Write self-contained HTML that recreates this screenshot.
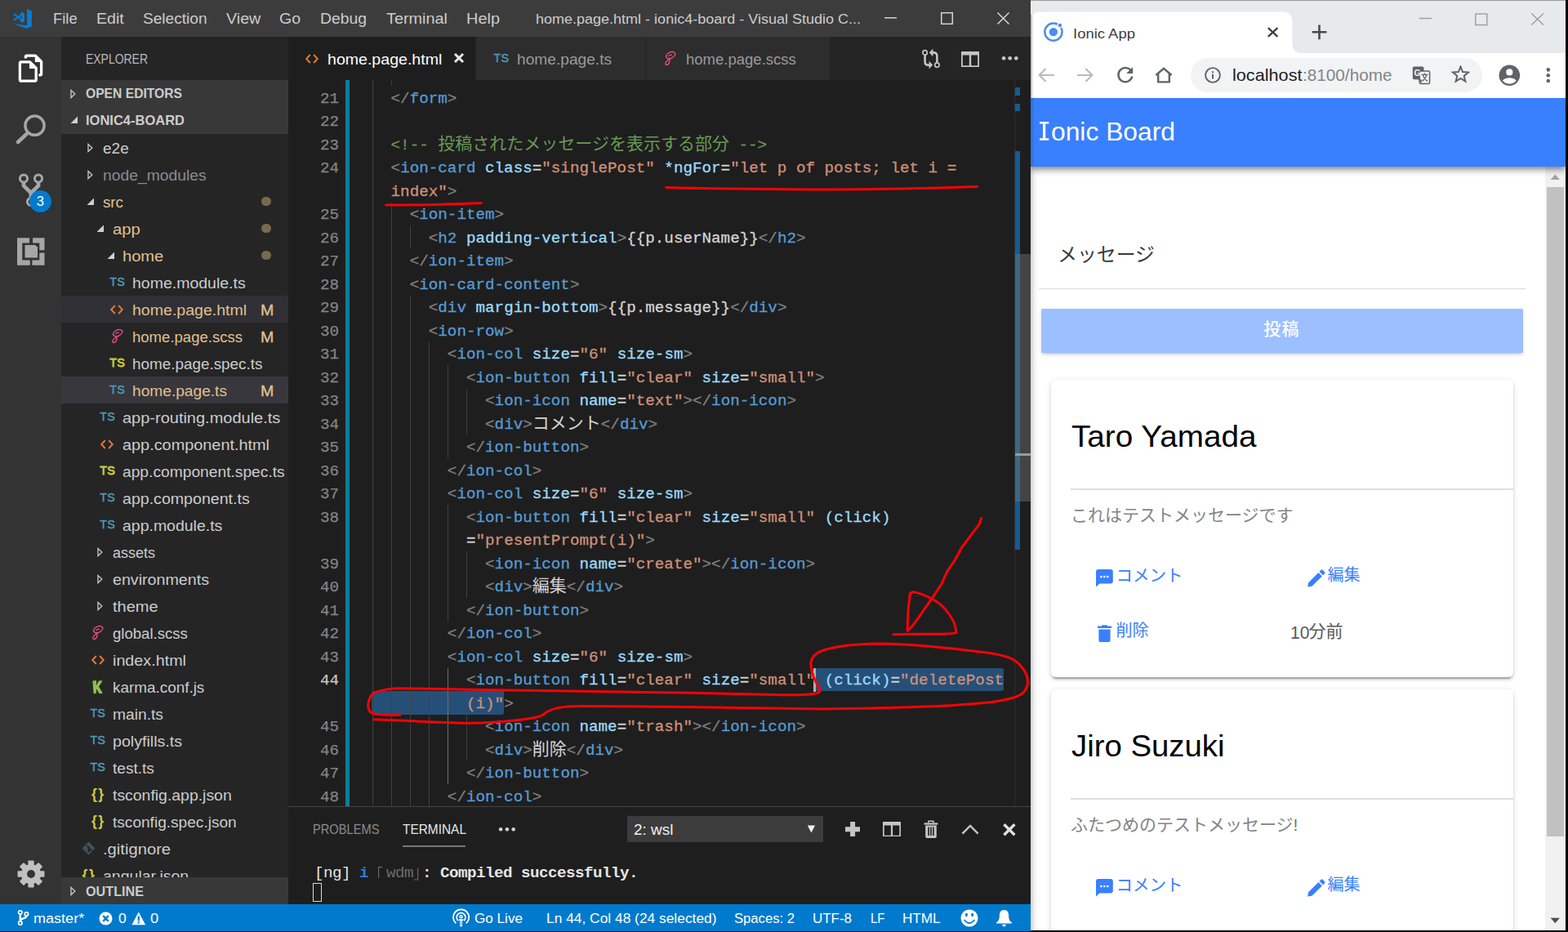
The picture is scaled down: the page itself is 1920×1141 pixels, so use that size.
<!DOCTYPE html><html lang="ja"><head><meta charset="utf-8"><title>home.page.html - ionic4-board - Visual Studio Code</title>
<style>
html,body{margin:0;padding:0}
body{width:1920px;height:1141px;overflow:hidden;background:#000;position:relative;font-family:"Liberation Sans",sans-serif}
div,svg{box-sizing:border-box}
.t{position:absolute;white-space:pre;transform-origin:0 50%}
.cj{font-family:"Liberation Sans","Noto Sans CJK JP",sans-serif;white-space:pre;-webkit-text-stroke:0}
.cjm{font-family:"Liberation Mono","Noto Sans CJK JP",monospace;white-space:pre;-webkit-text-stroke:0;font-size:21px}
.abs{position:absolute}
.cl{position:absolute;white-space:pre;-webkit-text-stroke:0.3px;font-family:"Liberation Mono",monospace;font-size:19.24px;height:28.5px;line-height:28.5px;color:#d4d4d4}
.ln{position:absolute;left:353px;width:62px;text-align:right;font-family:"Liberation Mono",monospace;font-size:19.24px;height:28.5px;line-height:28.5px;color:#858585;-webkit-text-stroke:0.25px}
.p{color:#808080}.g{color:#569cd6}.a{color:#9cdcfe}.s{color:#ce9178}.c{color:#6a9955}
.ig{position:absolute;width:1px;background:#404040}
.term{position:absolute;font-family:"Liberation Mono",monospace;font-size:19.24px;letter-spacing:-0.546px;height:24px;line-height:24px;white-space:pre;color:#e5e5e5}
</style></head><body><div style="position:absolute;left:0px;top:0px;width:1262px;height:45px;background:#3c3c3c;"></div><svg style="position:absolute;left:14px;top:8px;" width="28" height="30" viewBox="0 0 28 30"><g fill="#0a7bd0"><path d="M2 21 L19 23.3 V2.85 L24.9 5.5 V24.8 L18.6 26.9 Z"/><path fill-rule="evenodd" d="M8.2 13 L12.9 6.5 L16 8.2 V18.3 L12.7 20 Z M10.5 13.2 L12.9 11.2 V15.6 Z"/><path d="M3 9.2 L9.6 13.9 M2.8 16.8 L9.6 12.1" stroke="#0a7bd0" stroke-width="2.1" fill="none"/></g></svg><div class="t" id="f0" style="left:65.0px;top:10.3px;height:26px;line-height:26px;font-size:18.8px;color:#cccccc;transform:scaleX(0.9813);">File</div><div class="t" id="f1" style="left:118.0px;top:10.3px;height:26px;line-height:26px;font-size:18.8px;color:#cccccc;transform:scaleX(1.0409);">Edit</div><div class="t" id="f2" style="left:174.7px;top:10.3px;height:26px;line-height:26px;font-size:18.8px;color:#cccccc;transform:scaleX(1.0173);">Selection</div><div class="t" id="f3" style="left:276.7px;top:10.3px;height:26px;line-height:26px;font-size:18.8px;color:#cccccc;transform:scaleX(1.0477);">View</div><div class="t" id="f4" style="left:341.7px;top:10.3px;height:26px;line-height:26px;font-size:18.8px;color:#cccccc;transform:scaleX(1.0374);">Go</div><div class="t" id="f5" style="left:391.7px;top:10.3px;height:26px;line-height:26px;font-size:18.8px;color:#cccccc;transform:scaleX(1.0296);">Debug</div><div class="t" id="f6" style="left:472.7px;top:10.3px;height:26px;line-height:26px;font-size:18.8px;color:#cccccc;transform:scaleX(1.0566);">Terminal</div><div class="t" id="f7" style="left:571.0px;top:10.3px;height:26px;line-height:26px;font-size:18.8px;color:#cccccc;transform:scaleX(1.0611);">Help</div><div class="t" id="f8" style="left:656.0px;top:10.6px;height:24px;line-height:24px;font-size:17.4px;color:#cccccc;transform:scaleX(1.0354);">home.page.html - ionic4-board - Visual Studio C...</div><svg style="position:absolute;left:1070px;top:0px;" width="192" height="45" viewBox="0 0 192 45"><g stroke="#d4d4d4" stroke-width="1.5" fill="none"><path d="M13 21.8 H28"/><rect x="82.7" y="15.7" width="13.6" height="13.6"/><path d="M151.5 15.5 L165.5 29.5 M165.5 15.5 L151.5 29.5"/></g></svg><div style="position:absolute;left:0px;top:45px;width:75px;height:1062px;background:#333333;"></div><svg style="position:absolute;left:21px;top:65px;" width="33" height="37" viewBox="0 0 33 37"><g fill="none" stroke="#fff" stroke-width="3.3" stroke-linejoin="round"><path d="M10.4 6.6 V4.6 Q10.4 3.2 11.8 3.2 H22.4 L29.6 10.4 V25.4 Q29.6 26.8 28.2 26.8 H26.4"/><path d="M4.8 10.8 H15.6 L23.2 18.4 V32.6 Q23.2 34.2 21.6 34.2 H4.8 Q3.4 34.2 3.4 32.6 V12.4 Q3.4 10.8 4.8 10.8 Z"/></g><path d="M15 10.6 V19 H23.4 Z" fill="#fff"/><path d="M21.8 3 V11 H29.8 Z" fill="#fff"/></svg><svg style="position:absolute;left:18px;top:138px;" width="40" height="40" viewBox="0 0 40 40"><g fill="none" stroke="#a6a6a6"><circle cx="24.5" cy="15.7" r="11.6" stroke-width="3.5"/><path d="M16 24.6 L4 36" stroke-width="4.6" stroke-linecap="round"/></g></svg><svg style="position:absolute;left:21px;top:210px;" width="36" height="46" viewBox="0 0 36 46"><g fill="none" stroke="#a6a6a6" stroke-width="3"><circle cx="8" cy="8.5" r="4.6"/><circle cx="26" cy="8.5" r="4.6"/><circle cx="17" cy="37" r="4.6"/><path d="M8 13 V17.4 L17 26.2 V32.5 M26 13 V17.4 L17 26.2" stroke-width="4.8" stroke-linejoin="round"/></g></svg><div class="abs" style="left:35.8px;top:233px;width:27px;height:27px;border-radius:50%;background:#007acc;color:#fff;font-size:16.5px;line-height:27px;text-align:center">3</div><svg style="position:absolute;left:20px;top:290px;" width="36" height="36" viewBox="0 0 36 36"><g fill="#a6a6a6"><path d="M1 1.2 H16.1 V7.4 H7.2 V28.5 H16.8 V34.7 H1 Z"/><path d="M20.1 1.2 H34.5 V16.3 H28.3 V7.4 H20.1 Z"/><path d="M19.4 28.5 H28.3 V19.6 H34.5 V34.7 H19.4 Z"/><path d="M10.5 10.1 H24 V11.7 H26 V25.5 H10.5 Z"/></g></svg><svg style="position:absolute;left:20px;top:1052px;" width="36" height="36" viewBox="0 0 36 36"><g transform="translate(18 18) scale(.955)" fill="#c0c0c0"><rect x="-3.8" y="-17.2" width="7.6" height="8" rx="1" transform="rotate(0)"/><rect x="-3.8" y="-17.2" width="7.6" height="8" rx="1" transform="rotate(45)"/><rect x="-3.8" y="-17.2" width="7.6" height="8" rx="1" transform="rotate(90)"/><rect x="-3.8" y="-17.2" width="7.6" height="8" rx="1" transform="rotate(135)"/><rect x="-3.8" y="-17.2" width="7.6" height="8" rx="1" transform="rotate(180)"/><rect x="-3.8" y="-17.2" width="7.6" height="8" rx="1" transform="rotate(225)"/><rect x="-3.8" y="-17.2" width="7.6" height="8" rx="1" transform="rotate(270)"/><rect x="-3.8" y="-17.2" width="7.6" height="8" rx="1" transform="rotate(315)"/><path fill-rule="evenodd" d="M0 -12.6 A12.6 12.6 0 1 0 0 12.6 A12.6 12.6 0 1 0 0 -12.6 Z M0 -5.2 A5.2 5.2 0 1 1 0 5.2 A5.2 5.2 0 1 1 0 -5.2 Z"/></g></svg><div style="position:absolute;left:75px;top:45px;width:278px;height:1062px;background:#252526;"></div><div class="t" id="f9" style="left:105.0px;top:62.1px;height:22px;line-height:22px;font-size:15.9px;color:#bbbbbb;transform:scaleX(0.8781);">EXPLORER</div><div style="position:absolute;left:75px;top:98px;width:278px;height:66px;background:#383838;"></div><svg style="position:absolute;left:86.4px;top:108.5px;" width="8" height="12" viewBox="0 0 8 12"><path d="M1 1.4 L5.8 6 L1 10.6 Z" fill="none" stroke="#c5c5c5" stroke-width="1.35" stroke-linejoin="miter"/></svg><div class="t" id="f10" style="left:105.0px;top:103.9px;height:22px;line-height:22px;font-size:15.9px;color:#cccccc;transform:scaleX(0.9850);font-weight:bold;">OPEN EDITORS</div><svg style="position:absolute;left:85.6px;top:141.6px;" width="10" height="10" viewBox="0 0 10 10"><path d="M9 0.5 V9 H0.5 Z" fill="#d0d0d0"/></svg><div class="t" id="f11" style="left:105.0px;top:137.2px;height:22px;line-height:22px;font-size:15.9px;color:#cccccc;transform:scaleX(1.0382);font-weight:bold;">IONIC4-BOARD</div><div style="position:absolute;left:75px;top:362px;width:278px;height:33px;background:#2f2f35;"></div><div style="position:absolute;left:75px;top:461px;width:278px;height:33px;background:#37373d;"></div><div class="t" id="f12" style="left:126.0px;top:168.5px;height:26px;line-height:26px;font-size:18.7px;color:#cccccc;transform:scaleX(1.0164);">e2e</div><svg style="position:absolute;left:107.4px;top:174.5px;" width="8" height="12" viewBox="0 0 8 12"><path d="M1 1.4 L5.8 6 L1 10.6 Z" fill="none" stroke="#c5c5c5" stroke-width="1.35" stroke-linejoin="miter"/></svg><div class="t" id="f13" style="left:126.0px;top:201.5px;height:26px;line-height:26px;font-size:18.7px;color:#8c8c8c;transform:scaleX(1.0334);">node_modules</div><svg style="position:absolute;left:107.4px;top:207.5px;" width="8" height="12" viewBox="0 0 8 12"><path d="M1 1.4 L5.8 6 L1 10.6 Z" fill="none" stroke="#c5c5c5" stroke-width="1.35" stroke-linejoin="miter"/></svg><div class="t" id="f14" style="left:126.0px;top:234.5px;height:26px;line-height:26px;font-size:18.7px;color:#e2c08d;transform:scaleX(1.0031);">src</div><svg style="position:absolute;left:105.6px;top:241.6px;" width="10" height="10" viewBox="0 0 10 10"><path d="M9 0.5 V9 H0.5 Z" fill="#d0d0d0"/></svg><div class="t" id="f15" style="left:138.0px;top:267.5px;height:26px;line-height:26px;font-size:18.7px;color:#e2c08d;transform:scaleX(1.0806);">app</div><svg style="position:absolute;left:118.1px;top:274.6px;" width="10" height="10" viewBox="0 0 10 10"><path d="M9 0.5 V9 H0.5 Z" fill="#d0d0d0"/></svg><div class="t" id="f16" style="left:150.0px;top:300.5px;height:26px;line-height:26px;font-size:18.7px;color:#e2c08d;transform:scaleX(1.0759);">home</div><svg style="position:absolute;left:130.6px;top:307.6px;" width="10" height="10" viewBox="0 0 10 10"><path d="M9 0.5 V9 H0.5 Z" fill="#d0d0d0"/></svg><div class="t" id="f17" style="left:162.3px;top:333.5px;height:26px;line-height:26px;font-size:18.7px;color:#cccccc;transform:scaleX(1.0431);">home.module.ts</div><div class="abs" style="left:134.29999999999998px;top:335.4px;font-size:14.3px;line-height:20px;color:#519aba;-webkit-text-stroke:0.45px;letter-spacing:0.1px">TS</div><div class="t" id="f18" style="left:162.3px;top:366.5px;height:26px;line-height:26px;font-size:18.7px;color:#e2c08d;transform:scaleX(1.0461);">home.page.html</div><svg style="position:absolute;left:134.29999999999998px;top:371.7px;" width="18" height="14" viewBox="0 0 18 14"><path d="M6.8 2 L2.2 7 L6.8 12 M11.2 2 L15.8 7 L11.2 12" fill="none" stroke="#e37933" stroke-width="1.9" stroke-linejoin="miter"/></svg><div class="t" id="f19" style="left:162.3px;top:399.5px;height:26px;line-height:26px;font-size:18.7px;color:#e2c08d;transform:scaleX(0.9921);">home.page.scss</div><svg style="position:absolute;left:135.7px;top:402.1px;" width="15.4" height="19" viewBox="0 0 14 18"><path d="M11.6 2.2 C9 0.2 3.4 2.4 2.2 6 C1.4 8.6 5.4 9.6 6.6 9.2 C5.2 10.4 1.6 12.6 1.4 15 C1.2 16.6 3.4 17 4.6 15.8 C6 14.4 6.6 11.8 6 9.6 C8.6 9 12.6 6.6 12.8 4 C12.9 3.2 12.4 2.6 11.6 2.2 Z M5.2 6.2 C6.2 5.2 7.8 4.8 8.6 5" fill="none" stroke="#f55385" stroke-width="1.2" stroke-linecap="round"/></svg><div class="t" id="f20" style="left:162.3px;top:432.5px;height:26px;line-height:26px;font-size:18.7px;color:#cccccc;transform:scaleX(1.0095);">home.page.spec.ts</div><div class="abs" style="left:134.29999999999998px;top:434.4px;font-size:14.3px;line-height:20px;color:#cbcb41;-webkit-text-stroke:0.85px;letter-spacing:0.1px">TS</div><div class="t" id="f21" style="left:162.3px;top:465.5px;height:26px;line-height:26px;font-size:18.7px;color:#e2c08d;transform:scaleX(1.0243);">home.page.ts</div><div class="abs" style="left:134.29999999999998px;top:467.4px;font-size:14.3px;line-height:20px;color:#519aba;-webkit-text-stroke:0.45px;letter-spacing:0.1px">TS</div><div class="t" id="f22" style="left:150.0px;top:498.5px;height:26px;line-height:26px;font-size:18.7px;color:#cccccc;transform:scaleX(1.0693);">app-routing.module.ts</div><div class="abs" style="left:122.3px;top:500.4px;font-size:14.3px;line-height:20px;color:#519aba;-webkit-text-stroke:0.45px;letter-spacing:0.1px">TS</div><div class="t" id="f23" style="left:150.0px;top:531.5px;height:26px;line-height:26px;font-size:18.7px;color:#cccccc;transform:scaleX(1.0630);">app.component.html</div><svg style="position:absolute;left:122.30000000000001px;top:536.7px;" width="18" height="14" viewBox="0 0 18 14"><path d="M6.8 2 L2.2 7 L6.8 12 M11.2 2 L15.8 7 L11.2 12" fill="none" stroke="#e37933" stroke-width="1.9" stroke-linejoin="miter"/></svg><div class="t" id="f24" style="left:150.0px;top:564.5px;height:26px;line-height:26px;font-size:18.7px;color:#cccccc;transform:scaleX(1.0283);">app.component.spec.ts</div><div class="abs" style="left:122.3px;top:566.4px;font-size:14.3px;line-height:20px;color:#cbcb41;-webkit-text-stroke:0.85px;letter-spacing:0.1px">TS</div><div class="t" id="f25" style="left:150.0px;top:597.5px;height:26px;line-height:26px;font-size:18.7px;color:#cccccc;transform:scaleX(1.0480);">app.component.ts</div><div class="abs" style="left:122.3px;top:599.4px;font-size:14.3px;line-height:20px;color:#519aba;-webkit-text-stroke:0.45px;letter-spacing:0.1px">TS</div><div class="t" id="f26" style="left:150.0px;top:630.5px;height:26px;line-height:26px;font-size:18.7px;color:#cccccc;transform:scaleX(1.0418);">app.module.ts</div><div class="abs" style="left:122.3px;top:632.4px;font-size:14.3px;line-height:20px;color:#519aba;-webkit-text-stroke:0.45px;letter-spacing:0.1px">TS</div><div class="t" id="f27" style="left:138.0px;top:663.5px;height:26px;line-height:26px;font-size:18.7px;color:#cccccc;transform:scaleX(0.9627);">assets</div><svg style="position:absolute;left:119.4px;top:669.5px;" width="8" height="12" viewBox="0 0 8 12"><path d="M1 1.4 L5.8 6 L1 10.6 Z" fill="none" stroke="#c5c5c5" stroke-width="1.35" stroke-linejoin="miter"/></svg><div class="t" id="f28" style="left:138.0px;top:696.5px;height:26px;line-height:26px;font-size:18.7px;color:#cccccc;transform:scaleX(1.0518);">environments</div><svg style="position:absolute;left:119.4px;top:702.5px;" width="8" height="12" viewBox="0 0 8 12"><path d="M1 1.4 L5.8 6 L1 10.6 Z" fill="none" stroke="#c5c5c5" stroke-width="1.35" stroke-linejoin="miter"/></svg><div class="t" id="f29" style="left:138.0px;top:729.5px;height:26px;line-height:26px;font-size:18.7px;color:#cccccc;transform:scaleX(1.0721);">theme</div><svg style="position:absolute;left:119.4px;top:735.5px;" width="8" height="12" viewBox="0 0 8 12"><path d="M1 1.4 L5.8 6 L1 10.6 Z" fill="none" stroke="#c5c5c5" stroke-width="1.35" stroke-linejoin="miter"/></svg><div class="t" id="f30" style="left:138.4px;top:762.5px;height:26px;line-height:26px;font-size:18.7px;color:#cccccc;transform:scaleX(0.9929);">global.scss</div><svg style="position:absolute;left:111.9px;top:765.1px;" width="15.4" height="19" viewBox="0 0 14 18"><path d="M11.6 2.2 C9 0.2 3.4 2.4 2.2 6 C1.4 8.6 5.4 9.6 6.6 9.2 C5.2 10.4 1.6 12.6 1.4 15 C1.2 16.6 3.4 17 4.6 15.8 C6 14.4 6.6 11.8 6 9.6 C8.6 9 12.6 6.6 12.8 4 C12.9 3.2 12.4 2.6 11.6 2.2 Z M5.2 6.2 C6.2 5.2 7.8 4.8 8.6 5" fill="none" stroke="#f55385" stroke-width="1.2" stroke-linecap="round"/></svg><div class="t" id="f31" style="left:138.4px;top:795.5px;height:26px;line-height:26px;font-size:18.7px;color:#cccccc;transform:scaleX(1.0567);">index.html</div><svg style="position:absolute;left:110.5px;top:800.7px;" width="18" height="14" viewBox="0 0 18 14"><path d="M6.8 2 L2.2 7 L6.8 12 M11.2 2 L15.8 7 L11.2 12" fill="none" stroke="#e37933" stroke-width="1.9" stroke-linejoin="miter"/></svg><div class="t" id="f32" style="left:138.4px;top:828.5px;height:26px;line-height:26px;font-size:18.7px;color:#cccccc;transform:scaleX(1.0106);">karma.conf.js</div><svg style="position:absolute;left:113.0px;top:832.5999999999999px;" width="13" height="17" viewBox="0 0 13 17"><path d="M0.4 0.6 L5 0 L4.7 6.2 L8.2 0.2 L12.6 0.4 L8 7.4 L12.8 15.8 L8.6 16.2 L5.2 10.2 L4.6 16 L1.6 16.2 Z" fill="#8dc149"/></svg><div class="t" id="f33" style="left:138.4px;top:861.5px;height:26px;line-height:26px;font-size:18.7px;color:#cccccc;transform:scaleX(1.0277);">main.ts</div><div class="abs" style="left:110.5px;top:863.4px;font-size:14.3px;line-height:20px;color:#519aba;-webkit-text-stroke:0.45px;letter-spacing:0.1px">TS</div><div class="t" id="f34" style="left:138.4px;top:894.5px;height:26px;line-height:26px;font-size:18.7px;color:#cccccc;transform:scaleX(1.0492);">polyfills.ts</div><div class="abs" style="left:110.5px;top:896.4px;font-size:14.3px;line-height:20px;color:#519aba;-webkit-text-stroke:0.45px;letter-spacing:0.1px">TS</div><div class="t" id="f35" style="left:138.4px;top:927.5px;height:26px;line-height:26px;font-size:18.7px;color:#cccccc;transform:scaleX(1.0209);">test.ts</div><div class="abs" style="left:110.5px;top:929.4px;font-size:14.3px;line-height:20px;color:#519aba;-webkit-text-stroke:0.45px;letter-spacing:0.1px">TS</div><div class="t" id="f36" style="left:138.4px;top:960.5px;height:26px;line-height:26px;font-size:18.7px;color:#cccccc;transform:scaleX(1.0389);">tsconfig.app.json</div><div class="abs" style="left:110.0px;top:960.5px;width:19px;text-align:center;font-size:17.5px;line-height:22px;font-weight:bold;color:#cbcb41;letter-spacing:1.6px;padding-left:1.6px">{}</div><div class="t" id="f37" style="left:138.4px;top:993.5px;height:26px;line-height:26px;font-size:18.7px;color:#cccccc;transform:scaleX(1.0212);">tsconfig.spec.json</div><div class="abs" style="left:110.0px;top:993.5px;width:19px;text-align:center;font-size:17.5px;line-height:22px;font-weight:bold;color:#cbcb41;letter-spacing:1.6px;padding-left:1.6px">{}</div><div class="t" id="f38" style="left:126.2px;top:1026.5px;height:26px;line-height:26px;font-size:18.7px;color:#cccccc;transform:scaleX(1.0808);">.gitignore</div><svg style="position:absolute;left:99.6px;top:1030.2px;" width="17" height="17" viewBox="0 0 17 17"><path d="M8.5 0.6 L16.4 8.5 L8.5 16.4 L0.6 8.5 Z" fill="#41535b"/><path d="M6.2 5 L8.5 7.3 M8.5 7.3 V12 M8.5 8 L11 10.4" stroke="#252526" stroke-width="1.5" fill="none"/><circle cx="8.5" cy="12" r="1.3" fill="#252526"/><circle cx="11.2" cy="10.6" r="1.3" fill="#252526"/><circle cx="8.5" cy="7.3" r="1.3" fill="#252526"/></svg><div class="t" id="f39" style="left:126.2px;top:1059.5px;height:26px;line-height:26px;font-size:18.7px;color:#cccccc;transform:scaleX(1.0437);">angular.json</div><div class="abs" style="left:98.6px;top:1059.5px;width:19px;text-align:center;font-size:17.5px;line-height:22px;font-weight:bold;color:#cbcb41;letter-spacing:1.6px;padding-left:1.6px">{}</div><div class="t" id="f40" style="left:319.0px;top:366.5px;height:26px;line-height:26px;font-size:18.7px;color:#e2c08d;transform:scaleX(1.0463);-webkit-text-stroke:0.35px;">M</div><div class="t" id="f41" style="left:319.0px;top:399.5px;height:26px;line-height:26px;font-size:18.7px;color:#e2c08d;transform:scaleX(1.0463);-webkit-text-stroke:0.35px;">M</div><div class="t" id="f42" style="left:319.0px;top:465.5px;height:26px;line-height:26px;font-size:18.7px;color:#e2c08d;transform:scaleX(1.0463);-webkit-text-stroke:0.35px;">M</div><div class="abs" style="left:320.3px;top:240.5px;width:11.6px;height:11.6px;border-radius:50%;background:#79694f"></div><div class="abs" style="left:320.3px;top:273.5px;width:11.6px;height:11.6px;border-radius:50%;background:#79694f"></div><div class="abs" style="left:320.3px;top:306.5px;width:11.6px;height:11.6px;border-radius:50%;background:#79694f"></div><div style="position:absolute;left:75px;top:1074px;width:278px;height:33px;background:#383838;"></div><svg style="position:absolute;left:86.4px;top:1085.4px;" width="8" height="12" viewBox="0 0 8 12"><path d="M1 1.4 L5.8 6 L1 10.6 Z" fill="none" stroke="#c5c5c5" stroke-width="1.35" stroke-linejoin="miter"/></svg><div class="t" id="f43" style="left:105.0px;top:1080.9px;height:22px;line-height:22px;font-size:15.9px;color:#cccccc;transform:scaleX(1.0179);font-weight:bold;">OUTLINE</div><div style="position:absolute;left:353px;top:45px;width:909px;height:53px;background:#252526;"></div><div style="position:absolute;left:353px;top:45px;width:229px;height:53px;background:#1e1e1e;"></div><div style="position:absolute;left:583px;top:45px;width:207px;height:53px;background:#2d2d2d;"></div><div style="position:absolute;left:791px;top:45px;width:224.5px;height:53px;background:#2d2d2d;"></div><svg style="position:absolute;left:373px;top:64.5px;" width="18" height="14" viewBox="0 0 18 14"><path d="M6.8 2 L2.2 7 L6.8 12 M11.2 2 L15.8 7 L11.2 12" fill="none" stroke="#e37933" stroke-width="1.9" stroke-linejoin="miter"/></svg><div class="t" id="f44" style="left:400.7px;top:59.5px;height:26px;line-height:26px;font-size:18.7px;color:#ffffff;transform:scaleX(1.0469);">home.page.html</div><svg style="position:absolute;left:555px;top:64px;" width="14" height="14" viewBox="0 0 14 14"><path d="M2 2 L12 12 M12 2 L2 12" stroke="#e8e8e8" stroke-width="3" fill="none"/></svg><div class="abs" style="left:604.6px;top:61.1px;font-size:14.3px;line-height:20px;color:#519aba;-webkit-text-stroke:0.45px;letter-spacing:0.1px">TS</div><div class="t" id="f45" style="left:632.9px;top:59.5px;height:26px;line-height:26px;font-size:18.7px;color:#9a9a9a;transform:scaleX(1.0252);">home.page.ts</div><svg style="position:absolute;left:813.4px;top:61.6px;" width="15.4" height="19" viewBox="0 0 14 18"><path d="M11.6 2.2 C9 0.2 3.4 2.4 2.2 6 C1.4 8.6 5.4 9.6 6.6 9.2 C5.2 10.4 1.6 12.6 1.4 15 C1.2 16.6 3.4 17 4.6 15.8 C6 14.4 6.6 11.8 6 9.6 C8.6 9 12.6 6.6 12.8 4 C12.9 3.2 12.4 2.6 11.6 2.2 Z M5.2 6.2 C6.2 5.2 7.8 4.8 8.6 5" fill="none" stroke="#f55385" stroke-width="1.2" stroke-linecap="round"/></svg><div class="t" id="f46" style="left:840.0px;top:59.5px;height:26px;line-height:26px;font-size:18.7px;color:#9a9a9a;transform:scaleX(0.9906);">home.page.scss</div><svg style="position:absolute;left:1127px;top:58px;" width="26" height="28" viewBox="0 0 26 28"><g fill="none" stroke="#c5c5c5"><circle cx="5.6" cy="6.4" r="2.7" stroke-width="1.7"/><circle cx="20.4" cy="21.6" r="2.7" stroke-width="1.7"/><path d="M5.6 9.4 V17.4 Q5.6 21.6 9.8 21.6 H11.5" stroke-width="2.6"/><path d="M20.4 18.6 V10.6 Q20.4 6.4 16.2 6.4 H14.5" stroke-width="2.6"/></g><path d="M10.6 16.8 L15.2 21.6 L10.6 26.4 Z M15.4 1.6 L10.8 6.4 L15.4 11.2 Z" fill="#c5c5c5"/></svg><svg style="position:absolute;left:1177px;top:62.6px;" width="22" height="19" viewBox="0 0 22 19"><path fill="#c5c5c5" fill-rule="evenodd" d="M0 0 H22 V19 H0 Z M1.8 4.6 V17.2 H9.8 V4.6 Z M12.2 4.6 V17.2 H20.2 V4.6 Z"/></svg><svg style="position:absolute;left:1225px;top:67px;" width="24" height="9" viewBox="0 0 24 9"><g fill="#c5c5c5"><circle cx="4.1" cy="4.3" r="2.4"/><circle cx="11.7" cy="4.3" r="2.4"/><circle cx="19.3" cy="4.3" r="2.4"/></g></svg><div style="position:absolute;left:353px;top:98px;width:909px;height:890px;background:#1e1e1e;"></div><div style="position:absolute;left:423px;top:98px;width:5px;height:890px;background:#0c7d9d;"></div><div style="position:absolute;left:998.4px;top:818.2px;width:230.9px;height:28.3px;background:#264f78;border-radius:3px 3px 3px 0"></div><div style="position:absolute;left:455.2px;top:846.3px;width:162.2px;height:28.4px;background:#264f78;border-radius:3px 0 3px 3px"></div><div class="ig" style="left:455.5px;top:98.00px;height:7.25px;background:#404040"></div><div class="ig" style="left:478.6px;top:98.00px;height:7.25px;background:#404040"></div><div class="ig" style="left:455.5px;top:105.25px;height:28.50px;background:#404040"></div><div class="ig" style="left:455.5px;top:133.75px;height:28.50px;background:#404040"></div><div class="ig" style="left:455.5px;top:162.25px;height:28.50px;background:#404040"></div><div class="ig" style="left:455.5px;top:190.75px;height:28.50px;background:#404040"></div><div class="ig" style="left:455.5px;top:219.25px;height:28.50px;background:#404040"></div><div class="ig" style="left:455.5px;top:247.75px;height:28.50px;background:#404040"></div><div class="ig" style="left:478.6px;top:247.75px;height:28.50px;background:#404040"></div><div class="ig" style="left:455.5px;top:276.25px;height:28.50px;background:#404040"></div><div class="ig" style="left:478.6px;top:276.25px;height:28.50px;background:#404040"></div><div class="ig" style="left:501.7px;top:276.25px;height:28.50px;background:#404040"></div><div class="ig" style="left:455.5px;top:304.75px;height:28.50px;background:#404040"></div><div class="ig" style="left:478.6px;top:304.75px;height:28.50px;background:#404040"></div><div class="ig" style="left:455.5px;top:333.25px;height:28.50px;background:#404040"></div><div class="ig" style="left:478.6px;top:333.25px;height:28.50px;background:#404040"></div><div class="ig" style="left:455.5px;top:361.75px;height:28.50px;background:#404040"></div><div class="ig" style="left:478.6px;top:361.75px;height:28.50px;background:#404040"></div><div class="ig" style="left:501.7px;top:361.75px;height:28.50px;background:#404040"></div><div class="ig" style="left:455.5px;top:390.25px;height:28.50px;background:#404040"></div><div class="ig" style="left:478.6px;top:390.25px;height:28.50px;background:#404040"></div><div class="ig" style="left:501.7px;top:390.25px;height:28.50px;background:#404040"></div><div class="ig" style="left:455.5px;top:418.75px;height:28.50px;background:#404040"></div><div class="ig" style="left:478.6px;top:418.75px;height:28.50px;background:#404040"></div><div class="ig" style="left:501.7px;top:418.75px;height:28.50px;background:#404040"></div><div class="ig" style="left:524.8px;top:418.75px;height:28.50px;background:#404040"></div><div class="ig" style="left:455.5px;top:447.25px;height:28.50px;background:#404040"></div><div class="ig" style="left:478.6px;top:447.25px;height:28.50px;background:#404040"></div><div class="ig" style="left:501.7px;top:447.25px;height:28.50px;background:#404040"></div><div class="ig" style="left:524.8px;top:447.25px;height:28.50px;background:#404040"></div><div class="ig" style="left:547.9px;top:447.25px;height:28.50px;background:#404040"></div><div class="ig" style="left:455.5px;top:475.75px;height:28.50px;background:#404040"></div><div class="ig" style="left:478.6px;top:475.75px;height:28.50px;background:#404040"></div><div class="ig" style="left:501.7px;top:475.75px;height:28.50px;background:#404040"></div><div class="ig" style="left:524.8px;top:475.75px;height:28.50px;background:#404040"></div><div class="ig" style="left:547.9px;top:475.75px;height:28.50px;background:#404040"></div><div class="ig" style="left:571.0px;top:475.75px;height:28.50px;background:#404040"></div><div class="ig" style="left:455.5px;top:504.25px;height:28.50px;background:#404040"></div><div class="ig" style="left:478.6px;top:504.25px;height:28.50px;background:#404040"></div><div class="ig" style="left:501.7px;top:504.25px;height:28.50px;background:#404040"></div><div class="ig" style="left:524.8px;top:504.25px;height:28.50px;background:#404040"></div><div class="ig" style="left:547.9px;top:504.25px;height:28.50px;background:#404040"></div><div class="ig" style="left:571.0px;top:504.25px;height:28.50px;background:#404040"></div><div class="ig" style="left:455.5px;top:532.75px;height:28.50px;background:#404040"></div><div class="ig" style="left:478.6px;top:532.75px;height:28.50px;background:#404040"></div><div class="ig" style="left:501.7px;top:532.75px;height:28.50px;background:#404040"></div><div class="ig" style="left:524.8px;top:532.75px;height:28.50px;background:#404040"></div><div class="ig" style="left:547.9px;top:532.75px;height:28.50px;background:#404040"></div><div class="ig" style="left:455.5px;top:561.25px;height:28.50px;background:#404040"></div><div class="ig" style="left:478.6px;top:561.25px;height:28.50px;background:#404040"></div><div class="ig" style="left:501.7px;top:561.25px;height:28.50px;background:#404040"></div><div class="ig" style="left:524.8px;top:561.25px;height:28.50px;background:#404040"></div><div class="ig" style="left:455.5px;top:589.75px;height:28.50px;background:#404040"></div><div class="ig" style="left:478.6px;top:589.75px;height:28.50px;background:#404040"></div><div class="ig" style="left:501.7px;top:589.75px;height:28.50px;background:#404040"></div><div class="ig" style="left:524.8px;top:589.75px;height:28.50px;background:#404040"></div><div class="ig" style="left:455.5px;top:618.25px;height:28.50px;background:#404040"></div><div class="ig" style="left:478.6px;top:618.25px;height:28.50px;background:#404040"></div><div class="ig" style="left:501.7px;top:618.25px;height:28.50px;background:#404040"></div><div class="ig" style="left:524.8px;top:618.25px;height:28.50px;background:#404040"></div><div class="ig" style="left:547.9px;top:618.25px;height:28.50px;background:#404040"></div><div class="ig" style="left:455.5px;top:646.75px;height:28.50px;background:#404040"></div><div class="ig" style="left:478.6px;top:646.75px;height:28.50px;background:#404040"></div><div class="ig" style="left:501.7px;top:646.75px;height:28.50px;background:#404040"></div><div class="ig" style="left:524.8px;top:646.75px;height:28.50px;background:#404040"></div><div class="ig" style="left:547.9px;top:646.75px;height:28.50px;background:#404040"></div><div class="ig" style="left:455.5px;top:675.25px;height:28.50px;background:#404040"></div><div class="ig" style="left:478.6px;top:675.25px;height:28.50px;background:#404040"></div><div class="ig" style="left:501.7px;top:675.25px;height:28.50px;background:#404040"></div><div class="ig" style="left:524.8px;top:675.25px;height:28.50px;background:#404040"></div><div class="ig" style="left:547.9px;top:675.25px;height:28.50px;background:#404040"></div><div class="ig" style="left:571.0px;top:675.25px;height:28.50px;background:#404040"></div><div class="ig" style="left:455.5px;top:703.75px;height:28.50px;background:#404040"></div><div class="ig" style="left:478.6px;top:703.75px;height:28.50px;background:#404040"></div><div class="ig" style="left:501.7px;top:703.75px;height:28.50px;background:#404040"></div><div class="ig" style="left:524.8px;top:703.75px;height:28.50px;background:#404040"></div><div class="ig" style="left:547.9px;top:703.75px;height:28.50px;background:#404040"></div><div class="ig" style="left:571.0px;top:703.75px;height:28.50px;background:#404040"></div><div class="ig" style="left:455.5px;top:732.25px;height:28.50px;background:#404040"></div><div class="ig" style="left:478.6px;top:732.25px;height:28.50px;background:#404040"></div><div class="ig" style="left:501.7px;top:732.25px;height:28.50px;background:#404040"></div><div class="ig" style="left:524.8px;top:732.25px;height:28.50px;background:#404040"></div><div class="ig" style="left:547.9px;top:732.25px;height:28.50px;background:#404040"></div><div class="ig" style="left:455.5px;top:760.75px;height:28.50px;background:#404040"></div><div class="ig" style="left:478.6px;top:760.75px;height:28.50px;background:#404040"></div><div class="ig" style="left:501.7px;top:760.75px;height:28.50px;background:#404040"></div><div class="ig" style="left:524.8px;top:760.75px;height:28.50px;background:#404040"></div><div class="ig" style="left:455.5px;top:789.25px;height:28.50px;background:#404040"></div><div class="ig" style="left:478.6px;top:789.25px;height:28.50px;background:#404040"></div><div class="ig" style="left:501.7px;top:789.25px;height:28.50px;background:#404040"></div><div class="ig" style="left:524.8px;top:789.25px;height:28.50px;background:#404040"></div><div class="ig" style="left:455.5px;top:817.75px;height:28.50px;background:#404040"></div><div class="ig" style="left:478.6px;top:817.75px;height:28.50px;background:#404040"></div><div class="ig" style="left:501.7px;top:817.75px;height:28.50px;background:#404040"></div><div class="ig" style="left:524.8px;top:817.75px;height:28.50px;background:#404040"></div><div class="ig" style="left:547.9px;top:817.75px;height:28.50px;background:#6e6e6e"></div><div class="ig" style="left:455.5px;top:846.25px;height:28.50px;background:#404040"></div><div class="ig" style="left:478.6px;top:846.25px;height:28.50px;background:#404040"></div><div class="ig" style="left:501.7px;top:846.25px;height:28.50px;background:#404040"></div><div class="ig" style="left:524.8px;top:846.25px;height:28.50px;background:#404040"></div><div class="ig" style="left:547.9px;top:846.25px;height:28.50px;background:#6e6e6e"></div><div class="ig" style="left:455.5px;top:874.75px;height:28.50px;background:#404040"></div><div class="ig" style="left:478.6px;top:874.75px;height:28.50px;background:#404040"></div><div class="ig" style="left:501.7px;top:874.75px;height:28.50px;background:#404040"></div><div class="ig" style="left:524.8px;top:874.75px;height:28.50px;background:#404040"></div><div class="ig" style="left:547.9px;top:874.75px;height:28.50px;background:#6e6e6e"></div><div class="ig" style="left:571.0px;top:874.75px;height:28.50px;background:#404040"></div><div class="ig" style="left:455.5px;top:903.25px;height:28.50px;background:#404040"></div><div class="ig" style="left:478.6px;top:903.25px;height:28.50px;background:#404040"></div><div class="ig" style="left:501.7px;top:903.25px;height:28.50px;background:#404040"></div><div class="ig" style="left:524.8px;top:903.25px;height:28.50px;background:#404040"></div><div class="ig" style="left:547.9px;top:903.25px;height:28.50px;background:#6e6e6e"></div><div class="ig" style="left:571.0px;top:903.25px;height:28.50px;background:#404040"></div><div class="ig" style="left:455.5px;top:931.75px;height:28.50px;background:#404040"></div><div class="ig" style="left:478.6px;top:931.75px;height:28.50px;background:#404040"></div><div class="ig" style="left:501.7px;top:931.75px;height:28.50px;background:#404040"></div><div class="ig" style="left:524.8px;top:931.75px;height:28.50px;background:#404040"></div><div class="ig" style="left:547.9px;top:931.75px;height:28.50px;background:#6e6e6e"></div><div class="ig" style="left:455.5px;top:960.25px;height:27.25px;background:#404040"></div><div class="ig" style="left:478.6px;top:960.25px;height:27.25px;background:#404040"></div><div class="ig" style="left:501.7px;top:960.25px;height:27.25px;background:#404040"></div><div class="ig" style="left:524.8px;top:960.25px;height:27.25px;background:#404040"></div><div class="ln" style="top:106.55px">21</div><div class="cl" style="left:478.59px;top:106.55px"><span class="p">&lt;/</span><span class="g">form</span><span class="p">&gt;</span></div><div class="ln" style="top:135.05px">22</div><div class="ln" style="top:163.55px">23</div><div class="cl" style="left:478.59px;top:163.55px"><span class="c">&lt;!-- </span><span class="cjm" style="color:#6a9955">投稿されたメッセージを表示する部分</span><span class="c"> --&gt;</span></div><div class="ln" style="top:192.05px">24</div><div class="cl" style="left:478.59px;top:192.05px"><span class="p">&lt;</span><span class="g">ion-card</span> <span class="a">class</span>=<span class="s">&quot;singlePost&quot;</span> <span class="a">*ngFor</span>=<span class="s">&quot;let p of posts; let i =</span></div><div class="cl" style="left:478.59px;top:220.55px"><span class="s">index&quot;</span><span class="p">&gt;</span></div><div class="ln" style="top:249.05px">25</div><div class="cl" style="left:501.68px;top:249.05px"><span class="p">&lt;</span><span class="g">ion-item</span><span class="p">&gt;</span></div><div class="ln" style="top:277.55px">26</div><div class="cl" style="left:524.78px;top:277.55px"><span class="p">&lt;</span><span class="g">h2</span> <span class="a">padding-vertical</span><span class="p">&gt;</span>{{p.userName}}<span class="p">&lt;/</span><span class="g">h2</span><span class="p">&gt;</span></div><div class="ln" style="top:306.05px">27</div><div class="cl" style="left:501.68px;top:306.05px"><span class="p">&lt;/</span><span class="g">ion-item</span><span class="p">&gt;</span></div><div class="ln" style="top:334.55px">28</div><div class="cl" style="left:501.68px;top:334.55px"><span class="p">&lt;</span><span class="g">ion-card-content</span><span class="p">&gt;</span></div><div class="ln" style="top:363.05px">29</div><div class="cl" style="left:524.78px;top:363.05px"><span class="p">&lt;</span><span class="g">div</span> <span class="a">margin-bottom</span><span class="p">&gt;</span>{{p.message}}<span class="p">&lt;/</span><span class="g">div</span><span class="p">&gt;</span></div><div class="ln" style="top:391.55px">30</div><div class="cl" style="left:524.78px;top:391.55px"><span class="p">&lt;</span><span class="g">ion-row</span><span class="p">&gt;</span></div><div class="ln" style="top:420.05px">31</div><div class="cl" style="left:547.87px;top:420.05px"><span class="p">&lt;</span><span class="g">ion-col</span> <span class="a">size</span>=<span class="s">&quot;6&quot;</span> <span class="a">size-sm</span><span class="p">&gt;</span></div><div class="ln" style="top:448.55px">32</div><div class="cl" style="left:570.96px;top:448.55px"><span class="p">&lt;</span><span class="g">ion-button</span> <span class="a">fill</span>=<span class="s">&quot;clear&quot;</span> <span class="a">size</span>=<span class="s">&quot;small&quot;</span><span class="p">&gt;</span></div><div class="ln" style="top:477.05px">33</div><div class="cl" style="left:594.05px;top:477.05px"><span class="p">&lt;</span><span class="g">ion-icon</span> <span class="a">name</span>=<span class="s">&quot;text&quot;</span><span class="p">&gt;</span><span class="p">&lt;/</span><span class="g">ion-icon</span><span class="p">&gt;</span></div><div class="ln" style="top:505.55px">34</div><div class="cl" style="left:594.05px;top:505.55px"><span class="p">&lt;</span><span class="g">div</span><span class="p">&gt;</span><span class="cjm" style="color:#d4d4d4">コメント</span><span class="p">&lt;/</span><span class="g">div</span><span class="p">&gt;</span></div><div class="ln" style="top:534.05px">35</div><div class="cl" style="left:570.96px;top:534.05px"><span class="p">&lt;/</span><span class="g">ion-button</span><span class="p">&gt;</span></div><div class="ln" style="top:562.55px">36</div><div class="cl" style="left:547.87px;top:562.55px"><span class="p">&lt;/</span><span class="g">ion-col</span><span class="p">&gt;</span></div><div class="ln" style="top:591.05px">37</div><div class="cl" style="left:547.87px;top:591.05px"><span class="p">&lt;</span><span class="g">ion-col</span> <span class="a">size</span>=<span class="s">&quot;6&quot;</span> <span class="a">size-sm</span><span class="p">&gt;</span></div><div class="ln" style="top:619.55px">38</div><div class="cl" style="left:570.96px;top:619.55px"><span class="p">&lt;</span><span class="g">ion-button</span> <span class="a">fill</span>=<span class="s">&quot;clear&quot;</span> <span class="a">size</span>=<span class="s">&quot;small&quot;</span> <span class="a">(click)</span></div><div class="cl" style="left:570.96px;top:648.05px">=<span class="s">&quot;presentPrompt(i)&quot;</span><span class="p">&gt;</span></div><div class="ln" style="top:676.55px">39</div><div class="cl" style="left:594.05px;top:676.55px"><span class="p">&lt;</span><span class="g">ion-icon</span> <span class="a">name</span>=<span class="s">&quot;create&quot;</span><span class="p">&gt;</span><span class="p">&lt;/</span><span class="g">ion-icon</span><span class="p">&gt;</span></div><div class="ln" style="top:705.05px">40</div><div class="cl" style="left:594.05px;top:705.05px"><span class="p">&lt;</span><span class="g">div</span><span class="p">&gt;</span><span class="cjm" style="color:#d4d4d4">編集</span><span class="p">&lt;/</span><span class="g">div</span><span class="p">&gt;</span></div><div class="ln" style="top:733.55px">41</div><div class="cl" style="left:570.96px;top:733.55px"><span class="p">&lt;/</span><span class="g">ion-button</span><span class="p">&gt;</span></div><div class="ln" style="top:762.05px">42</div><div class="cl" style="left:547.87px;top:762.05px"><span class="p">&lt;/</span><span class="g">ion-col</span><span class="p">&gt;</span></div><div class="ln" style="top:790.55px">43</div><div class="cl" style="left:547.87px;top:790.55px"><span class="p">&lt;</span><span class="g">ion-col</span> <span class="a">size</span>=<span class="s">&quot;6&quot;</span> <span class="a">size-sm</span><span class="p">&gt;</span></div><div class="ln" style="top:819.05px;color:#c6c6c6">44</div><div class="cl" style="left:570.96px;top:819.05px"><span class="p">&lt;</span><span class="g">ion-button</span> <span class="a">fill</span>=<span class="s">&quot;clear&quot;</span> <span class="a">size</span>=<span class="s">&quot;small&quot;</span> <span class="a">(click)</span>=<span class="s">&quot;deletePost</span></div><div class="cl" style="left:570.96px;top:847.55px"><span class="s">(i)&quot;</span><span class="p">&gt;</span></div><div class="ln" style="top:876.05px">45</div><div class="cl" style="left:594.05px;top:876.05px"><span class="p">&lt;</span><span class="g">ion-icon</span> <span class="a">name</span>=<span class="s">&quot;trash&quot;</span><span class="p">&gt;</span><span class="p">&lt;/</span><span class="g">ion-icon</span><span class="p">&gt;</span></div><div class="ln" style="top:904.55px">46</div><div class="cl" style="left:594.05px;top:904.55px"><span class="p">&lt;</span><span class="g">div</span><span class="p">&gt;</span><span class="cjm" style="color:#d4d4d4">削除</span><span class="p">&lt;/</span><span class="g">div</span><span class="p">&gt;</span></div><div class="ln" style="top:933.05px">47</div><div class="cl" style="left:570.96px;top:933.05px"><span class="p">&lt;/</span><span class="g">ion-button</span><span class="p">&gt;</span></div><div class="ln" style="top:961.55px">48</div><div class="cl" style="left:547.87px;top:961.55px"><span class="p">&lt;/</span><span class="g">ion-col</span><span class="p">&gt;</span></div><div class="abs" style="left:353px;top:98px;width:880px;height:12px;overflow:hidden"><div class="cl" style="left:148.68px;top:-19.95px"><span class="p">&lt;/</span><span class="g">ion-item</span><span class="p">&gt;</span></div></div><div style="position:absolute;left:996px;top:818px;width:3px;height:28.5px;background:#aeafad;"></div><div style="position:absolute;left:1242px;top:98px;width:1px;height:890px;background:#303031;"></div><div style="position:absolute;left:1243px;top:107px;width:6px;height:9.6px;background:#115d92;"></div><div style="position:absolute;left:1243px;top:126.8px;width:6px;height:9.6px;background:#115d92;"></div><div style="position:absolute;left:1243px;top:185px;width:6px;height:488px;background:#115d92;"></div><div style="position:absolute;left:1243px;top:311px;width:19px;height:303px;background:rgba(121,121,121,0.42);"></div><div style="position:absolute;left:1243px;top:555.3px;width:19px;height:2.4px;background:#9a9a9a;"></div><div style="position:absolute;left:353px;top:988px;width:909px;height:119px;background:#1e1e1e;"></div><div style="position:absolute;left:353px;top:987px;width:909px;height:1px;background:#434343;"></div><div class="t" id="f47" style="left:382.5px;top:1004.8px;height:22px;line-height:22px;font-size:15.9px;color:#8c8c8c;transform:scaleX(0.9229);">PROBLEMS</div><div class="t" id="f48" style="left:493.0px;top:1004.8px;height:22px;line-height:22px;font-size:15.9px;color:#e7e7e7;transform:scaleX(0.9706);">TERMINAL</div><div style="position:absolute;left:493px;top:1035.4px;width:77px;height:1.2px;background:#767676;"></div><svg style="position:absolute;left:609px;top:1011px;" width="26" height="9" viewBox="0 0 26 9"><g fill="#d0d0d0"><circle cx="4.1" cy="4.3" r="2.3"/><circle cx="11.9" cy="4.3" r="2.3"/><circle cx="19.7" cy="4.3" r="2.3"/></g></svg><div style="position:absolute;left:768px;top:999px;width:240px;height:32px;background:#3c3c3c;"></div><div class="t" id="f49" style="left:775.5px;top:1002.5px;height:26px;line-height:26px;font-size:18.7px;color:#f0f0f0;transform:scaleX(1.0150);">2: wsl</div><svg style="position:absolute;left:988px;top:1010px;" width="11" height="10" viewBox="0 0 11 10"><path d="M0.8 0.4 H10 L5.4 9.6 Z" fill="#f0f0f0"/></svg><svg style="position:absolute;left:1035px;top:1005.7px;" width="18.2" height="18.4" viewBox="0 0 18.2 18.4"><path d="M6.1 0 H12.1 V6.2 H18.2 V12.2 H12.1 V18.4 H6.1 V12.2 H0 V6.2 H6.1 Z" fill="#c5c5c5"/></svg><svg style="position:absolute;left:1081px;top:1005.7px;" width="22" height="18.4" viewBox="0 0 22 18.4"><path fill="#c5c5c5" fill-rule="evenodd" d="M0 0 H22 V18.4 H0 Z M1.7 4.4 V16.7 H9.9 V4.4 Z M12.1 4.4 V16.7 H20.3 V4.4 Z"/></svg><svg style="position:absolute;left:1130.5px;top:1004px;" width="18" height="23" viewBox="0 0 18 23"><g fill="#c5c5c5"><path d="M0.6 3.4 H17.4 V5.6 H0.6 Z"/><path d="M5.2 3.6 V1.6 Q5.2 0.5 6.3 0.5 H11.7 Q12.8 0.5 12.8 1.6 V3.6 H11.2 V2.1 H6.8 V3.6 Z"/><path fill-rule="evenodd" d="M2.2 6.6 H15.8 V20.2 Q15.8 22 14 22 H4 Q2.2 22 2.2 20.2 Z M5.3 8.6 V19 H6.9 V8.6 Z M8.2 8.6 V19 H9.8 V8.6 Z M11.1 8.6 V19 H12.7 V8.6 Z"/></g></svg><svg style="position:absolute;left:1176px;top:1008px;" width="24" height="15" viewBox="0 0 24 15"><path d="M2.4 12.6 L12 3 L21.6 12.6" fill="none" stroke="#c5c5c5" stroke-width="2.4"/></svg><svg style="position:absolute;left:1227px;top:1006.5px;" width="18" height="18" viewBox="0 0 18 18"><path d="M2.4 2.2 L15.4 15.2 M15.4 2.2 L2.4 15.2" fill="none" stroke="#e0e0e0" stroke-width="3.4"/></svg><div class="term" style="left:385px;top:1056.6px">[ng] <b style="color:#2a7bde">i</b>  <span style="color:#6b6b6b">wdm</span> <b>: Compiled successfully.</b></div><svg style="position:absolute;left:460px;top:1058px;" width="60" height="22" viewBox="0 0 60 22"><path d="M3.6 17 V3.6 H8.2 M51.6 4.6 V19 H47" fill="none" stroke="#6b6b6b" stroke-width="1.1"/></svg><div class="abs" style="left:383.3px;top:1080.5px;width:11.2px;height:23.4px;border:1.4px solid #d8d8d8"></div><div style="position:absolute;left:0px;top:1106.8px;width:1262px;height:32.9px;background:#007acc;"></div><svg style="position:absolute;left:21.4px;top:1113px;" width="16" height="21" viewBox="0 0 16 21"><g fill="none" stroke="#fff" stroke-width="1.7"><circle cx="3.8" cy="4" r="2.2"/><circle cx="3.8" cy="17" r="2.2"/><circle cx="11.4" cy="6" r="2.2"/><path d="M3.8 6.2 V14.8 M11.4 8.2 C11.4 12 3.8 10.8 3.8 14.6" stroke-width="2.4"/></g></svg><div class="t" id="f50" style="left:40.8px;top:1111.6px;height:24px;line-height:24px;font-size:17.4px;color:#ffffff;transform:scaleX(1.0380);">master*</div><svg style="position:absolute;left:121px;top:1115.5px;" width="17" height="17" viewBox="0 0 17 17"><circle cx="8.5" cy="8.5" r="8" fill="#fff"/><path d="M5.2 5.2 L11.8 11.8 M11.8 5.2 L5.2 11.8" stroke="#007acc" stroke-width="2.4"/></svg><div class="t" id="f51" style="left:144.5px;top:1111.6px;height:24px;line-height:24px;font-size:17.4px;color:#ffffff;transform:scaleX(1.0029);">0</div><svg style="position:absolute;left:160.5px;top:1115.5px;" width="17.5" height="17" viewBox="0 0 17.5 17"><path d="M8.75 0.6 L17.1 16.2 H0.4 Z" fill="#fff"/><path d="M8.75 5.6 V11.4 M8.75 12.6 V14.6" stroke="#007acc" stroke-width="2.2"/></svg><div class="t" id="f52" style="left:183.8px;top:1111.6px;height:24px;line-height:24px;font-size:17.4px;color:#ffffff;transform:scaleX(1.0546);">0</div><svg style="position:absolute;left:553px;top:1111.6px;" width="23" height="24" viewBox="0 0 23 24"><g fill="none" stroke="#fff" stroke-width="1.7"><path d="M5.43 18.35 A9.6 9.6 0 1 1 17.77 18.35"/><path d="M8.13 15.14 A5.4 5.4 0 1 1 15.07 15.14"/><circle cx="11.6" cy="10.2" r="1.5" stroke-width="1.5"/></g><path d="M8.9 13.2 H14.3 V15 H13 V22.2 H10.2 V15 H8.9 Z" fill="#fff"/><path d="M11.6 15.4 V21" stroke="#007acc" stroke-width="0.7"/></svg><div class="t" id="f53" style="left:581.0px;top:1111.6px;height:24px;line-height:24px;font-size:17.4px;color:#ffffff;transform:scaleX(0.9844);">Go Live</div><div class="t" id="f54" style="left:669.0px;top:1111.6px;height:24px;line-height:24px;font-size:17.4px;color:#ffffff;transform:scaleX(0.9984);">Ln 44, Col 48 (24 selected)</div><div class="t" id="f55" style="left:899.0px;top:1111.6px;height:24px;line-height:24px;font-size:17.4px;color:#ffffff;transform:scaleX(0.9568);">Spaces: 2</div><div class="t" id="f56" style="left:995.0px;top:1111.6px;height:24px;line-height:24px;font-size:17.4px;color:#ffffff;transform:scaleX(0.9740);">UTF-8</div><div class="t" id="f57" style="left:1065.5px;top:1111.6px;height:24px;line-height:24px;font-size:17.4px;color:#ffffff;transform:scaleX(0.8622);">LF</div><div class="t" id="f58" style="left:1105.4px;top:1111.6px;height:24px;line-height:24px;font-size:17.4px;color:#ffffff;transform:scaleX(0.9843);">HTML</div><svg style="position:absolute;left:1176px;top:1113px;" width="22" height="22" viewBox="0 0 22 22"><circle cx="11" cy="11" r="10.5" fill="#fff"/><ellipse cx="7.4" cy="7" rx="1.5" ry="2.2" fill="#007acc"/><ellipse cx="14.6" cy="7" rx="1.5" ry="2.2" fill="#007acc"/><path d="M4.6 13 Q11 21.2 17.4 13" fill="none" stroke="#007acc" stroke-width="1.7"/></svg><svg style="position:absolute;left:1219.4px;top:1113px;" width="21" height="22" viewBox="0 0 21 22"><path d="M10.5 1 C14.8 1 16.2 4.6 16.2 8.4 C16.2 13 17.6 14.6 20 16.4 V17.6 H1 V16.4 C3.4 14.6 4.8 13 4.8 8.4 C4.8 4.6 6.2 1 10.5 1 Z" fill="#fff"/><path d="M8 18.8 H13 Q12.6 21.4 10.5 21.4 Q8.4 21.4 8 18.8 Z" fill="#fff"/></svg><div style="position:absolute;left:1262px;top:0px;width:655px;height:1138.6px;background:#ffffff;"></div><div style="position:absolute;left:1262px;top:0px;width:655px;height:65px;background:#e7eaed;"></div><div style="position:absolute;left:1262px;top:0px;width:655px;height:1px;background:#9a9a9a;"></div><svg style="position:absolute;left:1262px;top:0px;" width="360" height="66" viewBox="0 0 360 66"><path d="M0 65.2 V27 Q0 14.4 12.6 14.4 H308 Q320.4 14.4 320.4 27 V52.6 Q320.4 65.2 333 65.2 Z" fill="#fff"/></svg><div style="position:absolute;left:1262px;top:64.7px;width:655px;height:54.8px;background:#ffffff;"></div><div style="position:absolute;left:1262px;top:16px;width:4px;height:103.5px;background:linear-gradient(to right,#a4a4a4,#e6e6e6 50%,#fff);border-radius:4px 0 0 0"></div><svg style="position:absolute;left:1276px;top:26px;" width="28" height="27" viewBox="0 0 28 27"><circle cx="13.9" cy="13.1" r="10.6" fill="none" stroke="#4a8bf5" stroke-width="2.5"/><circle cx="13.9" cy="13.1" r="5.2" fill="#4a8bf5"/><circle cx="21.9" cy="5" r="3.4" fill="#fff"/><circle cx="21.9" cy="5" r="2.2" fill="#4a8bf5"/></svg><div class="t" id="f59" style="left:1313.7px;top:28.8px;height:24px;line-height:24px;font-size:17.2px;color:#3c4043;transform:scaleX(1.0733);">Ionic App</div><svg style="position:absolute;left:1551px;top:32px;" width="16" height="15" viewBox="0 0 16 15"><path d="M1.8 2.2 L13.4 12.8 M13.4 2.2 L1.8 12.8" stroke="#3c4043" stroke-width="2.3" fill="none"/></svg><svg style="position:absolute;left:1605px;top:29px;" width="21" height="21" viewBox="0 0 21 21"><path d="M10.5 1.4 V19.2 M1.6 10.3 H19.4" stroke="#474a4e" stroke-width="2.6" fill="none"/></svg><svg style="position:absolute;left:1730px;top:10px;" width="170" height="26" viewBox="0 0 170 26"><g stroke="#9b9da0" stroke-width="1.4" fill="none"><path d="M7.8 12.5 H23"/><rect x="76.8" y="7" width="14" height="13.6"/><path d="M145.3 6.4 L160 20.4 M160 6.4 L145.3 20.4"/></g></svg><svg style="position:absolute;left:1268px;top:80px;" width="26" height="24" viewBox="0 0 26 24"><path d="M23 12 H5.4 M12.6 4 L4.6 12 L12.6 20" stroke="#b9bbbe" stroke-width="2.2" fill="none"/></svg><svg style="position:absolute;left:1316px;top:80px;" width="26" height="24" viewBox="0 0 26 24"><path d="M3 12 H20.6 M13.4 4 L21.4 12 L13.4 20" stroke="#b9bbbe" stroke-width="2.2" fill="none"/></svg><svg style="position:absolute;left:1365px;top:79px;" width="26" height="26" viewBox="0 0 26 26"><path d="M20.4 8.2 A8.6 8.6 0 1 0 21.4 14.6" stroke="#5f6368" stroke-width="2.4" fill="none"/><path d="M22.2 3 V11 H14.2 Z" fill="#5f6368"/></svg><svg style="position:absolute;left:1413px;top:79px;" width="24" height="25" viewBox="0 0 24 25"><path d="M2.4 13 L12 4.8 L21.6 13 M5.2 11 V21.4 H18.8 V11" stroke="#5f6368" stroke-width="2.4" fill="none" stroke-linejoin="miter"/></svg><div style="position:absolute;left:1458px;top:71.4px;width:357px;height:41.2px;background:#f1f3f4;border-radius:21px"></div><svg style="position:absolute;left:1474px;top:81px;" width="22" height="22" viewBox="0 0 22 22"><circle cx="11" cy="11" r="8.9" fill="none" stroke="#5f6368" stroke-width="1.9"/><path d="M11 9.8 V15.6 M11 6.2 V8.2" stroke="#5f6368" stroke-width="2"/></svg><div class="t" id="f60" style="left:1509.0px;top:77.4px;height:29px;line-height:29px;font-size:20.6px;color:#202124;transform:scaleX(1.0519);">localhost</div><div class="t" id="f61" style="left:1594.5px;top:77.4px;height:29px;line-height:29px;font-size:20.6px;color:#80868b;transform:scaleX(1.0066);">:8100/home</div><svg style="position:absolute;left:1729px;top:81px;" width="23" height="23" viewBox="0 0 23 23"><rect x="0.8" y="0.6" width="13.6" height="15.6" rx="1.6" fill="#5f6368"/><rect x="9.2" y="6" width="12.4" height="15.4" rx="1.4" fill="#f1f3f4" stroke="#5f6368" stroke-width="1.5"/><text x="2.4" y="12.4" font-size="10.5" font-weight="bold" fill="#f1f3f4" font-family="Liberation Sans">G</text><path d="M11.6 10.4 H19.4 M15.5 8.6 V10.4 M17.8 10.6 Q16.8 15 12.4 18.4 M13.4 10.8 Q14.6 15.4 19 18.4" stroke="#5f6368" stroke-width="1.3" fill="none"/><path d="M7.4 16.2 L11.6 21 L11.6 16.2 Z" fill="#5f6368"/></svg><svg style="position:absolute;left:1776.5px;top:80.4px;" width="23" height="23" viewBox="0 0 23 23"><path d="M11.50 1.60 L14.09 8.04 L21.01 8.51 L15.68 12.96 L17.38 19.69 L11.50 16.00 L5.62 19.69 L7.32 12.96 L1.99 8.51 L8.91 8.04 Z" fill="none" stroke="#5f6368" stroke-width="2" stroke-linejoin="miter"/></svg><svg style="position:absolute;left:1835px;top:79px;" width="27" height="27" viewBox="0 0 27 27"><defs><clipPath id="pc"><circle cx="13.3" cy="13.2" r="10.6"/></clipPath></defs><circle cx="13.3" cy="13.2" r="12.8" fill="#5f6368"/><circle cx="13.3" cy="9.4" r="4.1" fill="#fff"/><ellipse cx="13.3" cy="21.6" rx="9" ry="5.4" fill="#fff" clip-path="url(#pc)"/></svg><svg style="position:absolute;left:1892px;top:82px;" width="8" height="20" viewBox="0 0 8 20"><g fill="#5f6368"><circle cx="3.8" cy="3.4" r="2.3"/><circle cx="3.8" cy="10.3" r="2.3"/><circle cx="3.8" cy="17" r="2.3"/></g></svg><div class="abs" style="left:1262px;top:119.5px;width:655px;height:1019px;overflow:hidden;background:#fff"><div style="position:absolute;left:-1262px;top:-119.5px"><div style="position:absolute;left:1262px;top:204px;width:11px;height:935px;background:linear-gradient(to right,#d0d0d0,#efefef 40%,#fbfbfb 70%,#fff);"></div><div class="abs" style="left:1295px;top:299.4px;height:26px;line-height:26px"><span class="cj" style="font-size:23.9px;color:#3a3a3a">メッセージ</span></div><div style="position:absolute;left:1272px;top:352.8px;width:596px;height:1.4px;background:#dcdcdc;"></div><div class="abs" style="left:1275px;top:378px;width:590px;height:53.6px;background:#9cbfff;border-radius:1px;box-shadow:0 4.5px 1.5px -3px rgba(0,0,0,.1),0 3px 3px 0 rgba(0,0,0,.07),0 1.5px 7.5px 0 rgba(0,0,0,.06)"></div><div class="abs" style="left:1547.2px;top:391.6px;height:22px;line-height:22px"><span class="cj" style="font-size:21px;font-weight:500;letter-spacing:1.3px;color:#ffffff">投稿</span></div><div class="abs" style="left:1286.6px;top:464.8px;width:566.4px;height:364px;background:#fff;border-radius:6px;box-shadow:0 4.5px 1.5px -3px rgba(0,0,0,.2),0 3px 3px 0 rgba(0,0,0,.14),0 1.5px 7.5px 0 rgba(0,0,0,.12)"></div><div class="t" id="f62" style="left:1311.5px;top:510.0px;height:50px;line-height:50px;font-size:36px;color:#000000;transform:scaleX(1.0745);">Taro Yamada</div><div style="position:absolute;left:1311px;top:598.4px;width:542px;height:1.4px;background:#dedede;"></div><div class="abs" style="left:1311px;top:619.4px;height:24px;line-height:24px;white-space:pre;font-size:21px;color:#737373"><span class="cj" style="font-size:21px;color:#848484">これはテストメッセージです</span></div><svg style="position:absolute;left:1342px;top:697.1px;" width="21" height="22" viewBox="0 0 21 22"><path d="M3 0 H18 Q20.8 0 20.8 2.8 V14.6 Q20.8 17.4 18 17.4 H4.4 L0 21.6 V2.8 Q0 0 3 0 Z" fill="#3880ff"/><g fill="#fff"><rect x="5.2" y="7.9" width="2.3" height="2.3"/><rect x="9.2" y="7.9" width="2.3" height="2.3"/><rect x="13.2" y="7.9" width="2.3" height="2.3"/></g></svg><div class="abs" style="left:1366.6px;top:693.9px;height:22px;line-height:22px"><span class="cj" style="font-size:20.5px;color:#3880ff">コメント</span></div><svg style="position:absolute;left:1600.6px;top:697.1px;" width="22" height="22" viewBox="0 0 22 22"><path d="M0.2 21.6 L1 16.4 L13.4 4 L17.8 8.4 L5.4 20.8 Z M14.6 2.8 L16.6 0.8 Q17.6 -0.2 18.6 0.8 L21 3.2 Q22 4.2 21 5.2 L19 7.2 Z" fill="#3880ff"/></svg><div class="abs" style="left:1625.4px;top:693.3000000000001px;height:22px;line-height:22px"><span class="cj" style="font-size:20.1px;color:#3880ff">編集</span></div><svg style="position:absolute;left:1344px;top:765.3px;" width="17" height="21" viewBox="0 0 17 21"><path d="M0 1.6 H4.6 L5.6 0.2 H11.4 L12.4 1.6 H17 V4 H0 Z M1.4 5.4 H15.6 V18.4 Q15.6 21 13 21 H4 Q1.4 21 1.4 18.4 Z" fill="#3880ff"/></svg><div class="abs" style="left:1366.4px;top:761.4px;height:22px;line-height:22px"><span class="cj" style="font-size:20.1px;color:#3880ff">削除</span></div><div class="t" id="f63" style="left:1579.6px;top:759.8px;height:30px;line-height:30px;font-size:21.4px;color:#595959;transform:scaleX(0.9833);">10</div><div class="abs" style="left:1602.6px;top:761.8px;height:22px;line-height:22px"><span class="cj" style="font-size:21px;color:#595959">分前</span></div><div class="abs" style="left:1286.6px;top:843.8px;width:566.4px;height:364px;background:#fff;border-radius:6px;box-shadow:0 4.5px 1.5px -3px rgba(0,0,0,.2),0 3px 3px 0 rgba(0,0,0,.14),0 1.5px 7.5px 0 rgba(0,0,0,.12)"></div><div class="t" id="f64" style="left:1311.5px;top:889.0px;height:50px;line-height:50px;font-size:36px;color:#000000;transform:scaleX(1.0650);">Jiro Suzuki</div><div style="position:absolute;left:1311px;top:977.4px;width:542px;height:1.4px;background:#dedede;"></div><div class="abs" style="left:1311px;top:998.4px;height:24px;line-height:24px;white-space:pre;font-size:21px;color:#737373"><span class="cj" style="font-size:21px;color:#848484">ふたつめのテストメッセージ</span>!</div><svg style="position:absolute;left:1342px;top:1076.1px;" width="21" height="22" viewBox="0 0 21 22"><path d="M3 0 H18 Q20.8 0 20.8 2.8 V14.6 Q20.8 17.4 18 17.4 H4.4 L0 21.6 V2.8 Q0 0 3 0 Z" fill="#3880ff"/><g fill="#fff"><rect x="5.2" y="7.9" width="2.3" height="2.3"/><rect x="9.2" y="7.9" width="2.3" height="2.3"/><rect x="13.2" y="7.9" width="2.3" height="2.3"/></g></svg><div class="abs" style="left:1366.6px;top:1072.8999999999999px;height:22px;line-height:22px"><span class="cj" style="font-size:20.5px;color:#3880ff">コメント</span></div><svg style="position:absolute;left:1600.6px;top:1076.1px;" width="22" height="22" viewBox="0 0 22 22"><path d="M0.2 21.6 L1 16.4 L13.4 4 L17.8 8.4 L5.4 20.8 Z M14.6 2.8 L16.6 0.8 Q17.6 -0.2 18.6 0.8 L21 3.2 Q22 4.2 21 5.2 L19 7.2 Z" fill="#3880ff"/></svg><div class="abs" style="left:1625.4px;top:1072.3px;height:22px;line-height:22px"><span class="cj" style="font-size:20.1px;color:#3880ff">編集</span></div><div style="position:absolute;left:1892px;top:204px;width:25px;height:935px;background:#f1f1f1;"></div><div style="position:absolute;left:1894px;top:228.6px;width:21px;height:795px;background:#c1c1c1;"></div><svg style="position:absolute;left:1898px;top:213.2px;" width="13" height="8" viewBox="0 0 13 8"><path d="M6.3 0.6 L12 7 H0.6 Z" fill="#a3a3a3"/></svg><svg style="position:absolute;left:1898px;top:1123px;" width="13" height="8" viewBox="0 0 13 8"><path d="M0.6 0.8 H12 L6.3 7.2 Z" fill="#505050"/></svg><div class="abs" style="left:1262px;top:119.5px;width:655px;height:84.2px;background:#3880ff;box-shadow:0 3px 6px -1px rgba(0,0,0,.32),0 6px 7.5px 0 rgba(0,0,0,.16),0 1.5px 11px 0 rgba(0,0,0,.12)"></div><div style="position:absolute;left:1262px;top:119.5px;width:5px;height:84.2px;background:linear-gradient(to right,rgba(0,0,0,.16),rgba(0,0,0,0));"></div><svg style="position:absolute;left:1272px;top:148px;" width="14" height="25" viewBox="0 0 14 25"><path d="M1 1 H12.2 V3.6 H8.2 V21.2 H12.2 V23.8 H1 V21.2 H5 V3.6 H1 Z" fill="#fff"/></svg><div class="t" id="f65" style="left:1287.0px;top:139.6px;height:43px;line-height:43px;font-size:30.6px;color:#ffffff;transform:scaleX(1.0392);">onic Board</div></div></div><svg style="position:absolute;left:0px;top:0px;pointer-events:none" width="1920" height="1141" viewBox="0 0 1920 1141"><g fill="none" stroke="#fb0007" stroke-width="3" stroke-linecap="round" stroke-linejoin="round"><path d="M815.7 229.5 C870 231 930 231.6 992 231.9 C1060 232.2 1130 230.8 1196.5 228.5"/><path d="M472.7 251 C510 251.6 550 250 589.3 248.4"/><path d="M1201.7 634.5 L1198.8 642.1 L1191 652.3 L1177.5 670.5 L1168.9 686.3 L1160.2 698.9 L1153.1 714.7 L1140.5 733.6 L1129.4 749.4 L1123.9 757.3 L1116.8 766.7 L1111.3 772.3"/><path d="M1111.3 772.3 C1111 757 1112.4 740 1114.4 726.5 C1116 724.6 1118 724.7 1120 724.9 C1127 726.6 1134 729.6 1140.5 732.8 C1144.4 735 1148 737.2 1151.5 739.9 C1155.6 743.6 1159.4 748 1162.6 752.5 C1164.8 755.6 1166.6 758.8 1168.1 762 C1169.6 766 1170.6 770.4 1171.2 774.6 C1166 775.8 1160 776 1154.7 776.2 C1144 776.4 1133 776.2 1123.1 776.2 C1113 776.3 1103 776.5 1093.9 776.7"/><path d="M489.6 875.3 C480 875.4 470 875.4 461.7 874.5 C456 873.6 453 872 452.2 869.9 C450.6 867 450.4 864.6 450.8 861.8 C451.4 857.6 452.6 854 454.9 850.9 C458 847.6 462 846.4 467.1 845.5 C474 843.6 481 843 488.8 842.8 C517 842.8 546 843.4 575.4 844.2 C620 845 665 845.6 710.9 846.3 C756 847 801 847.6 846.3 848.2 C884 849 922 850 960 850.8 C971 850.8 982 850.6 991.6 849.9 C996 849.6 999.6 849.2 1001.9 848.2 C1004 847 1004.4 845.4 1003.9 843.9 C1002.4 840.4 1000 837 998.4 833.6 C996.6 829.6 995 825.6 994.1 821.6 C993.2 818 992.8 814.6 992.9 811.3 C993.4 808 994.6 805.2 996.7 802.7 C999.8 799.6 1003.8 797.6 1008.8 795.8 C1016.6 793.6 1025 792 1034.5 790.6 C1048 789 1062 788.2 1077.5 788 C1094 788.2 1111 789.2 1129.1 790.6 C1146 792 1163 793.8 1180.6 795.8 C1192 797 1203.6 798.4 1215 800.1 C1222.4 801.4 1229.4 803 1235.6 805.2 C1241.4 807.6 1246 810.8 1249.4 814.7 C1253 818.4 1255.6 822.4 1257.1 826.7 C1258.4 830.8 1258.8 834.8 1258 838.8 C1257.2 842.4 1255.6 845.6 1252.8 848.2 C1249.6 851 1245.6 852.8 1240.8 854.2 C1232.6 856.4 1224 858 1215 859.4 C1198 861.2 1181 862.6 1163.4 863.7 C1140.6 864.8 1117.8 865.6 1094.7 866.3 C1066 867 1037.6 867.6 1008.8 868 C986 867.8 963 867.4 940 867.1 C900 866.4 860 865.6 819.2 865.3 C783 864.8 747 864.4 710.9 864.5 C701 864.6 691.6 865 683.8 866.4 C678.4 867.6 674 869.2 670.2 871.3 C668 872.6 666.4 874 664.8 875.3 C662.4 876.6 659.8 877.4 656.7 878 C648 880 639 881.2 629.6 882.1 C612 884.2 594 885.2 575.4 885.3 C557 885 539 884.2 521.3 883.4 C500 882.6 478.6 881.6 457.6 880.7"/></g></svg></body></html>
